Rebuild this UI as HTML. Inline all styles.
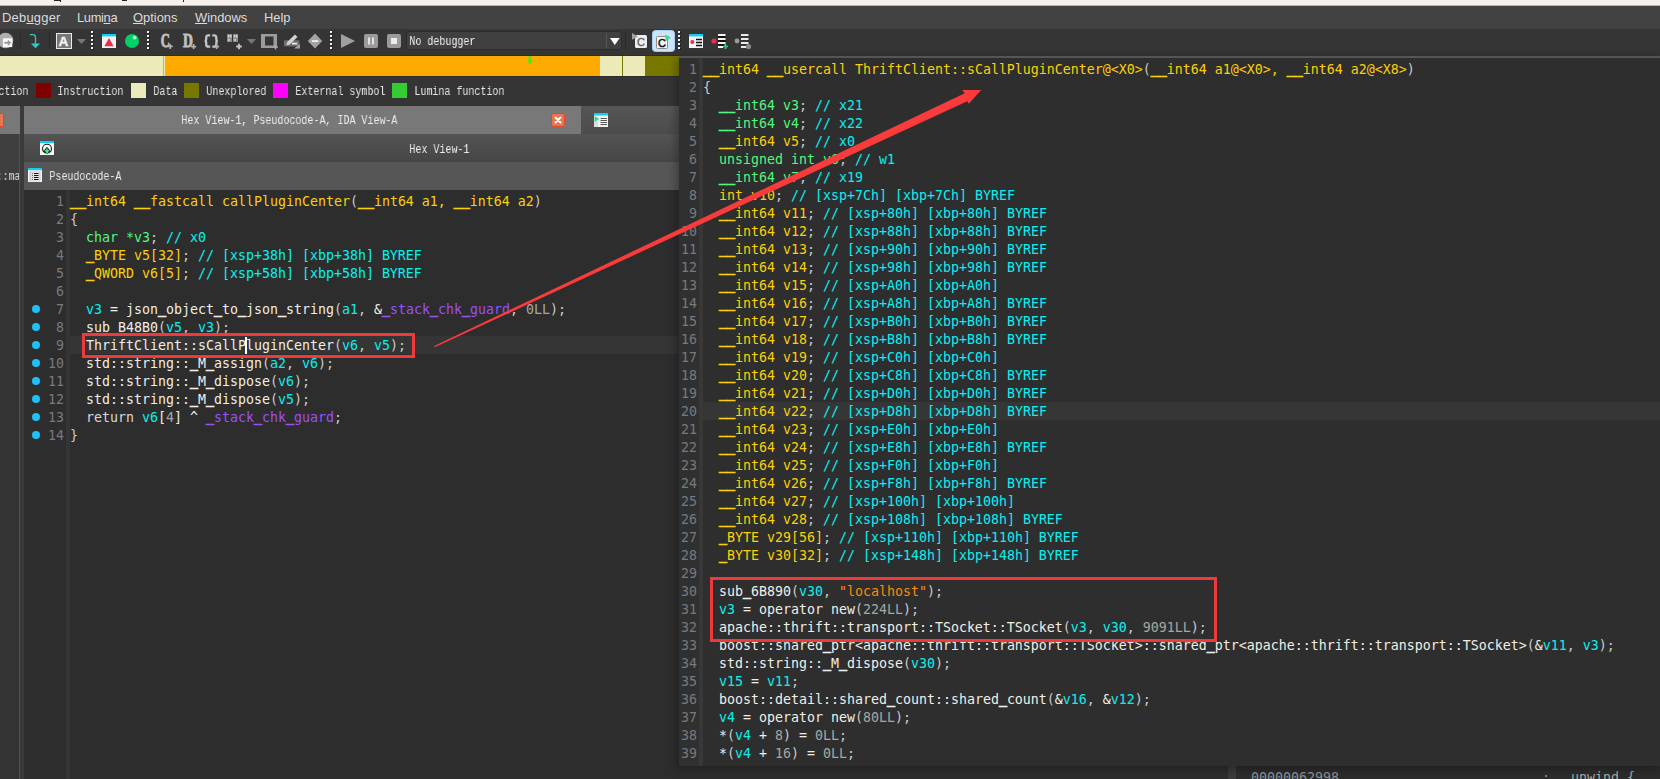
<!DOCTYPE html>
<html lang="en">
<head>
<meta charset="utf-8">
<title>IDA - callPluginCenter</title>
<style>
html,body{margin:0;padding:0}
body{width:1660px;height:779px;overflow:hidden;position:relative;background:#353535;font-family:"Liberation Sans",sans-serif}
.abs,.ln,.no,.dot,.sq,.lg,.mi{position:absolute}
.ln,.no{font-family:"DejaVu Sans Mono","Liberation Mono",monospace;font-size:13.29px;line-height:18px;height:18px;white-space:pre;letter-spacing:0}
.ln b{font-weight:normal;position:relative;top:-1.5px;-webkit-text-stroke:.7px}
.no{width:40px;text-align:right;color:#767b80}
.dot{left:32px;width:8px;height:8px;border-radius:50%;background:#1dc0f8}
.ui{font-family:"Liberation Mono",monospace;font-size:12px;color:#e6e6e6;white-space:pre;line-height:14px;transform:translateX(-.6px) scaleX(.8333);transform-origin:0 0;will-change:transform}
.sq{top:83px;width:15px;height:15px}
.lg{top:85px}
.mi{top:10px;font-size:12.9px;line-height:16px;color:#dcdcdc;white-space:pre}
.mi u{text-decoration-thickness:1px;text-underline-offset:1px}
</style>
</head>
<body>
<!-- top sliver of the window above -->
<div class="abs" style="left:0;top:0;width:1660px;height:6px;background:#b8b4b0"></div>
<div class="abs" style="left:0;top:0;width:1660px;height:5px;background:#f6f1ec"></div>
<div class="abs" style="left:54px;top:0;width:6px;height:1px;background:#222"></div>
<div class="abs" style="left:60px;top:0;width:1px;height:2px;background:#222"></div>
<div class="abs" style="left:122px;top:0;width:5px;height:1px;background:#222"></div>
<div class="abs" style="left:183px;top:0;width:1px;height:2px;background:#222"></div>

<!-- menu bar -->
<div class="abs" style="left:0;top:6px;width:1660px;height:23px;background:#424242"></div>
<div class="mi" style="left:2px;letter-spacing:.25px">Deb<u>u</u>gger</div>
<div class="mi" style="left:77px;letter-spacing:-.35px">Lumi<u>n</u>a</div>
<div class="mi" style="left:133px"><u>O</u>ptions</div>
<div class="mi" style="left:195px"><u>W</u>indows</div>
<div class="mi" style="left:264px">Help</div>

<!-- toolbar -->
<div class="abs" style="left:0;top:29px;width:1660px;height:27px;background:#353535"></div>
<div class="abs" style="left:406px;top:31px;width:216px;height:19px;background:#404040;border:1px solid #2c2c2c;border-radius:3px;box-sizing:border-box"></div>
<svg class="abs" style="left:0;top:29px" width="760" height="27" viewBox="0 29 760 27"><circle cx="5.500" cy="40.500" r="7.800" fill="#aeaeae"/><rect x="3" y="38.300" width="9.300" height="8.800" fill="#fafafa"/><path d="M4.300 41.700h3.500v-2.200l3.400 3.200-3.400 3.200v-2.200h-3.500z" fill="#9a9a9a"/><rect x="20" y="33" width="1" height="16" fill="#2a2a2a"/><path d="M29.800 34.600h2.900a2.800 2.800 0 0 1 2.800 2.800v7" fill="none" stroke="#3cc4c4" stroke-width="1.300"/><path d="M30.900 43.500h9.200l-4.600 4.700z" fill="#3cc4c4"/><rect x="49" y="33" width="1" height="16" fill="#2a2a2a"/><rect x="56.500" y="33.500" width="15" height="15" fill="#787878" stroke="#ececec"/><text x="63.500" y="45.900" text-anchor="middle" style="font:bold 13.600px Liberation Sans,sans-serif" fill="#f4f4f4" stroke="#f4f4f4" stroke-width=".35">A</text><path d="M77 39h9l-4.5 5z" fill="#75757c"/><rect x="92" y="32" width="2" height="2" fill="#222222"/><rect x="91" y="31" width="2" height="2" fill="#f2f2f2"/><rect x="92" y="36" width="2" height="2" fill="#222222"/><rect x="91" y="35" width="2" height="2" fill="#f2f2f2"/><rect x="92" y="40" width="2" height="2" fill="#222222"/><rect x="91" y="39" width="2" height="2" fill="#f2f2f2"/><rect x="92" y="44" width="2" height="2" fill="#222222"/><rect x="91" y="43" width="2" height="2" fill="#f2f2f2"/><rect x="92" y="48" width="2" height="2" fill="#222222"/><rect x="91" y="47" width="2" height="2" fill="#f2f2f2"/><rect x="102" y="34" width="14" height="14" fill="#f1f1f1"/><rect x="102" y="34" width="14" height="2.4" fill="#10cdf6"/><path d="M104.4 46.2h9.2L109 38z" fill="#f02a4c"/><circle cx="132" cy="41" r="7" fill="#00d166"/><circle cx="134.6" cy="37.6" r="1.9" fill="#b4f3cf"/><rect x="148" y="32" width="2" height="2" fill="#222222"/><rect x="147" y="31" width="2" height="2" fill="#f2f2f2"/><rect x="148" y="36" width="2" height="2" fill="#222222"/><rect x="147" y="35" width="2" height="2" fill="#f2f2f2"/><rect x="148" y="40" width="2" height="2" fill="#222222"/><rect x="147" y="39" width="2" height="2" fill="#f2f2f2"/><rect x="148" y="44" width="2" height="2" fill="#222222"/><rect x="147" y="43" width="2" height="2" fill="#f2f2f2"/><rect x="148" y="48" width="2" height="2" fill="#222222"/><rect x="147" y="47" width="2" height="2" fill="#f2f2f2"/><text transform="translate(160.800,47.200) scale(.68,1)" font-family="Liberation Serif, serif" font-weight="bold" font-size="18.500" fill="#c0c0c0" stroke="#c0c0c0" stroke-width=".9">C</text><path d="M167.7 46.4h5.0M170.2 43.9v5.0" stroke="#b4b4b4" stroke-width="1.6"/><text transform="translate(183,47.200) scale(.74,1)" font-family="Liberation Serif, serif" font-weight="bold" font-size="18.500" fill="#c0c0c0" stroke="#c0c0c0" stroke-width=".9">D</text><path d="M191.1 46.6h5.0M193.6 44.1v5.0" stroke="#b4b4b4" stroke-width="1.6"/><path d="M210.200 35.300h-1.700q-2.300 0-2.300 2.300v1.700q0 1.600-1.500 1.700q1.500 .1 1.500 1.700v1.700q0 2.300 2.300 2.300h1.700M212.300 35.300h1.700q2.300 0 2.300 2.300v1.700q0 1.600 1.500 1.700q-1.500 .1-1.500 1.700v1.700q0 2.300-2.300 2.300h-1.700" fill="none" stroke="#c4c4c4" stroke-width="2.300"/><path d="M214.1 46.6h5.0M216.6 44.1v5.0" stroke="#b4b4b4" stroke-width="1.6"/><rect x="227" y="34" width="5" height="8" fill="#8a8a8a"/><rect x="233" y="34" width="5" height="8" fill="#8a8a8a"/><rect x="228" y="35" width="1.500" height="2.500" fill="#d0d0d0"/><rect x="230" y="35" width="1.500" height="2.500" fill="#d0d0d0"/><rect x="234" y="35" width="1.500" height="2.500" fill="#d0d0d0"/><rect x="236" y="35" width="1.500" height="2.500" fill="#d0d0d0"/><rect x="228" y="39" width="2" height="2" fill="#c4c4c4"/><rect x="234" y="39" width="2" height="2" fill="#c4c4c4"/><path d="M236.2 46.5h5.6M239 43.7v5.6" stroke="#c8c8c8" stroke-width="1.8"/><path d="M247 39h9l-4.500 5z" fill="#75757c"/><rect x="261" y="34" width="16" height="14" fill="#9c9c9c"/><rect x="265" y="36.500" width="8.500" height="9" fill="#353535"/><path d="M273.0 47h5.0M275.5 44.5v5.0" stroke="#a6a6a6" stroke-width="1.6"/><rect x="284" y="40.300" width="15.300" height="6" fill="#707070"/><path d="M294 48.600h6v-4.600z" fill="#a2a2a2"/><path d="M286.300 45.200l1-3.300 7.600-7.300 2.600 2.500-7.700 7.300z" fill="#d2d2d2"/><rect x="292" y="42.800" width="5.200" height="1.600" fill="#f4f4f4"/><path d="M315 33.600l7.200 7.400-7.200 7.400-7.200-7.400z" fill="#a2a2a2"/><rect x="311.800" y="40.200" width="6.400" height="1.800" fill="#f2f2f2"/><rect x="331" y="32" width="2" height="2" fill="#222222"/><rect x="330" y="31" width="2" height="2" fill="#f2f2f2"/><rect x="331" y="36" width="2" height="2" fill="#222222"/><rect x="330" y="35" width="2" height="2" fill="#f2f2f2"/><rect x="331" y="40" width="2" height="2" fill="#222222"/><rect x="330" y="39" width="2" height="2" fill="#f2f2f2"/><rect x="331" y="44" width="2" height="2" fill="#222222"/><rect x="330" y="43" width="2" height="2" fill="#f2f2f2"/><rect x="331" y="48" width="2" height="2" fill="#222222"/><rect x="330" y="47" width="2" height="2" fill="#f2f2f2"/><path d="M341 34l14 7-14 7z" fill="#a0a0a0"/><rect x="364" y="34" width="14" height="14" rx="2" fill="#9a9a9a"/><rect x="368" y="37.500" width="2" height="7" fill="#e2e2e2"/><rect x="372" y="37.500" width="2" height="7" fill="#e2e2e2"/><rect x="387" y="34" width="14" height="14" rx="2" fill="#9a9a9a"/><rect x="391" y="38" width="6" height="6" fill="#ececec"/><path d="M610 38h9.600l-4.800 7z" fill="#ffffff"/><rect x="625" y="32" width="1" height="18" fill="#2b2b2b"/><rect x="635" y="35" width="12" height="13" rx="1.500" fill="#eeeeee"/><path d="M632 33l6 3.400-6 3.400z" fill="#a0a0a0"/><text x="637" y="46" font-family="Liberation Sans, sans-serif" font-size="11" fill="#5a5a5a" stroke="#5a5a5a" stroke-width=".3">C</text><rect x="652.500" y="30.500" width="22" height="21" rx="3" fill="#cce4f9" stroke="#a4d0f6"/><rect x="656.500" y="36.500" width="11" height="12" rx="1" fill="#f4f4f4" stroke="#8c8c8c"/><text x="658" y="47" font-family="Liberation Sans, sans-serif" font-size="11" fill="#111" stroke="#111" stroke-width=".5">C</text><path d="M665.500 34.500l5.500 3.300-5.500 3.300z" fill="#3fd58a"/><rect x="679" y="32" width="2" height="2" fill="#222222"/><rect x="678" y="31" width="2" height="2" fill="#f2f2f2"/><rect x="679" y="36" width="2" height="2" fill="#222222"/><rect x="678" y="35" width="2" height="2" fill="#f2f2f2"/><rect x="679" y="40" width="2" height="2" fill="#222222"/><rect x="678" y="39" width="2" height="2" fill="#f2f2f2"/><rect x="679" y="44" width="2" height="2" fill="#222222"/><rect x="678" y="43" width="2" height="2" fill="#f2f2f2"/><rect x="679" y="48" width="2" height="2" fill="#222222"/><rect x="678" y="47" width="2" height="2" fill="#f2f2f2"/><rect x="689" y="34" width="14" height="14" fill="#f4f4f4"/><rect x="689" y="34" width="14" height="2.400" fill="#10cdf6"/><circle cx="692.300" cy="42" r="2" fill="#f02a4c"/><path d="M696 39.500h6M696 42.500h6M696 45.500h6" stroke="#111" stroke-width="1.600"/><circle cx="714" cy="41" r="2.600" fill="#f02a4c"/><path d="M718 35h7.500M718 39h7.500M718 43h7.500M718 47h5" stroke="#f4f4f4" stroke-width="1.800"/><path d="M718 37h7.500M718 41h7.500M718 45h6" stroke="#111" stroke-width="1.800"/><path d="M723.0 46.5h5.0M725.5 44.0v5.0" stroke="#2fd07a" stroke-width="1.6"/><circle cx="737" cy="41" r="2.400" fill="#9a9a9a"/><path d="M741 35h7.500M741 39h7.500M741 43h7.500M741 47h5" stroke="#eaeaea" stroke-width="1.800"/><circle cx="748.500" cy="46.500" r="2.600" fill="#8a8a8a"/></svg>
<div class="abs" style="left:606px;top:33px;width:1px;height:15px;background:#555"></div>
<div class="abs ui" style="left:410px;top:35px;color:#f0f0f0">No debugger</div>

<!-- navigation band -->
<div class="abs" style="left:0;top:55px;width:679px;height:22px;background:#2c2c2c"></div>
<div class="abs" style="left:0;top:56px;width:163px;height:20px;background:#eceab8"></div>
<div class="abs" style="left:163px;top:56px;width:1px;height:20px;background:#ffaa00"></div>
<div class="abs" style="left:164px;top:56px;width:1px;height:20px;background:#eceab8"></div>
<div class="abs" style="left:165px;top:56px;width:435px;height:20px;background:#ffaa00"></div>
<div class="abs" style="left:600px;top:56px;width:22px;height:20px;background:#eceab8"></div>
<div class="abs" style="left:622px;top:56px;width:1px;height:20px;background:#787800"></div>
<div class="abs" style="left:623px;top:56px;width:22px;height:20px;background:#eceab8"></div>
<div class="abs" style="left:645px;top:56px;width:34px;height:20px;background:#787800"></div>
<svg class="abs" style="left:526px;top:56px" width="8" height="9" viewBox="0 0 8 9"><path d="M2.500 0h3v4.500h2L4 8.500 .5 4.500h2z" fill="#5fe312"/></svg>

<!-- legend -->
<div class="lg ui" style="left:-1px">ction</div>
<div class="sq" style="left:36px;background:#800000"></div>
<div class="lg ui" style="left:58px">Instruction</div>
<div class="sq" style="left:131px;background:#eceab8"></div>
<div class="lg ui" style="left:154px">Data</div>
<div class="sq" style="left:184px;background:#787800"></div>
<div class="lg ui" style="left:207px">Unexplored</div>
<div class="sq" style="left:273px;background:#ff00ff"></div>
<div class="lg ui" style="left:296px">External symbol</div>
<div class="sq" style="left:392px;background:#33cc33"></div>
<div class="lg ui" style="left:415px">Lumina function</div>

<!-- tab rows -->
<div class="abs" style="left:0;top:106px;width:20px;height:28px;background:#787878"></div>
<div class="abs" style="left:0;top:113px;width:4px;height:14px;background:#e8764e;border-radius:0 2px 2px 0;border:1px solid #e2452f;border-left:0;box-sizing:border-box"></div>
<div class="abs" style="left:24px;top:106px;width:557px;height:28px;background:#787878"></div>
<div class="abs" style="left:581px;top:106px;width:98px;height:28px;background:linear-gradient(#555,#4c4c4c)"></div>
<div class="abs ui" style="left:182px;top:114px;color:#ececec">Hex View-1, Pseudocode-A, IDA View-A</div>
<svg class="abs" style="left:551px;top:113px" width="14" height="14" viewBox="0 0 14 14"><rect x=".5" y=".5" width="13" height="13" rx="2" fill="#e47650" stroke="#e2452f"/><path d="M4.500 4.500l5 5M9.500 4.500l-5 5" stroke="#fff" stroke-width="1.900" stroke-linecap="round"/></svg>
<svg class="abs" style="left:594px;top:113px" width="14" height="14" viewBox="0 0 14 14"><rect width="14" height="14" fill="#f2f2f2"/><rect width="14" height="2.5" fill="#10cdf6"/><rect x="0" y="8" width="4" height="6" fill="#dcdcdc"/><path d="M6.500 5.500h6.500M6.500 7.500h6.500M6.500 9.500h6.500M6.500 11.500h6.500" stroke="#333" stroke-width=".8"/><path d="M0.500 3l5 3-5 3z" fill="#3fd58a"/></svg>

<div class="abs" style="left:24px;top:134px;width:655px;height:28px;background:linear-gradient(#545454,#464646)"></div>
<svg class="abs" style="left:40px;top:141px" width="14" height="14" viewBox="0 0 14 14"><rect width="14" height="14" fill="#f6f6f6"/><rect width="14" height="2.200" fill="#10cdf6"/><circle cx="7" cy="7.800" r="4.500" fill="#fafafa" stroke="#1a1a1a" stroke-width="1.100"/><path d="M3.300 10.200L7 5.800l3.700 4.400q-3.700 3.600-7.400 0z" fill="#1a1a1a"/><path d="M7 7.200v4M5.600 9.600L7 11.600l1.400-2z" stroke="#3ff08c" stroke-width="1.300" fill="#3ff08c"/></svg>
<div class="abs ui" style="left:410px;top:143px;color:#ececec">Hex View-1</div>

<div class="abs" style="left:24px;top:162px;width:655px;height:28px;background:#565656"></div>
<svg class="abs" style="left:28px;top:168px" width="14" height="14" viewBox="0 0 14 14"><rect width="14" height="14" fill="#f4f4f4"/><rect width="14" height="2.200" fill="#10cdf6"/><rect x="1.500" y="3.200" width="11" height="10" fill="#cacaca"/><rect x="3" y="3.200" width="8.500" height="10" fill="#e2e2e2"/><path d="M6 5.500h4.500M6 7.500h4.500M6 9.500h4.500M6 11.500h4.500" stroke="#1a1a1a" stroke-width="1"/><path d="M4 5.500h1M4 7.500h1M4 9.500h1M4 11.500h1" stroke="#1f86d8" stroke-width="1"/></svg>
<div class="abs ui" style="left:50px;top:170px;color:#ececec">Pseudocode-A</div>

<!-- far-left docked strip -->
<div class="abs" style="left:0;top:134px;width:19px;height:46px;background:#3f3f3f"></div>
<div class="abs" style="left:0;top:180px;width:19px;height:599px;background:#343434"></div>
<div class="abs" style="left:19px;top:134px;width:1px;height:645px;background:#515151"></div>
<div class="abs" style="left:20px;top:106px;width:4px;height:673px;background:#3a3a3a"></div>
<div class="abs" style="left:0;top:166px;width:19px;height:18px;overflow:hidden"><div class="abs ui" style="left:-3px;top:4px;color:#d8d8d8">::ma</div></div>

<!-- left pseudocode view -->
<div class="abs" style="left:24px;top:190px;width:655px;height:589px;background:#2d2d2d"></div>
<div class="abs" style="left:66px;top:190px;width:4px;height:589px;background:#353535"></div>
<div class="abs" style="left:70px;top:336px;width:609px;height:18px;background:#353535"></div>
<i class="dot" style="top:305px"></i>
<i class="dot" style="top:323px"></i>
<i class="dot" style="top:341px"></i>
<i class="dot" style="top:359px"></i>
<i class="dot" style="top:377px"></i>
<i class="dot" style="top:395px"></i>
<i class="dot" style="top:413px"></i>
<i class="dot" style="top:431px"></i>
<div class="no" style="left:24px;top:193px">1</div>
<div class="no" style="left:24px;top:211px">2</div>
<div class="no" style="left:24px;top:229px">3</div>
<div class="no" style="left:24px;top:247px">4</div>
<div class="no" style="left:24px;top:265px">5</div>
<div class="no" style="left:24px;top:283px">6</div>
<div class="no" style="left:24px;top:301px">7</div>
<div class="no" style="left:24px;top:319px">8</div>
<div class="no" style="left:24px;top:337px">9</div>
<div class="no" style="left:24px;top:355px">10</div>
<div class="no" style="left:24px;top:373px">11</div>
<div class="no" style="left:24px;top:391px">12</div>
<div class="no" style="left:24px;top:409px">13</div>
<div class="no" style="left:24px;top:427px">14</div>
<div class="ln" style="left:70px;top:193px"><span style="color:#fcd008"><b>__</b>int64 <b>__</b>fastcall callPluginCenter</span><span style="color:#cbcbcb">(</span><span style="color:#fcd008"><b>__</b>int64 a1, <b>__</b>int64 a2</span><span style="color:#cbcbcb">)</span></div>
<div class="ln" style="left:70px;top:211px"><span style="color:#cbcbcb">{</span></div>
<div class="ln" style="left:70px;top:229px">  <span style="color:#50f87c">char </span><span style="color:#50f87c">*v3</span><span style="color:#cbcbcb">;</span> <span style="color:#08f0f0">// x0</span></div>
<div class="ln" style="left:70px;top:247px">  <span style="color:#fcd008"><b>_</b>BYTE </span><span style="color:#fcd008">v5[32]</span><span style="color:#cbcbcb">;</span> <span style="color:#08f0f0">// [xsp+38h] [xbp+38h] BYREF</span></div>
<div class="ln" style="left:70px;top:265px">  <span style="color:#fcd008"><b>_</b>QWORD </span><span style="color:#fcd008">v6[5]</span><span style="color:#cbcbcb">;</span> <span style="color:#08f0f0">// [xsp+58h] [xbp+58h] BYREF</span></div>
<div class="ln" style="left:70px;top:283px"></div>
<div class="ln" style="left:70px;top:301px">  <span style="color:#0ceeee">v3</span> <span style="color:#f0eee6">=</span> <span style="color:#f0eee6">json<b>_</b>object<b>_</b>to<b>_</b>json<b>_</b>string</span><span style="color:#cbcbcb">(</span><span style="color:#0ceeee">a1</span><span style="color:#cbcbcb">,</span> <span style="color:#f0eee6">&amp;</span><span style="color:#9d50fa"><b>_</b>stack<b>_</b>chk<b>_</b>guard</span><span style="color:#cbcbcb">,</span> <span style="color:#a3a8a3">0LL</span><span style="color:#cbcbcb">);</span></div>
<div class="ln" style="left:70px;top:319px">  <span style="color:#f0eee6">sub<b>_</b>B48B0</span><span style="color:#cbcbcb">(</span><span style="color:#0ceeee">v5</span><span style="color:#cbcbcb">,</span> <span style="color:#0ceeee">v3</span><span style="color:#cbcbcb">);</span></div>
<div class="ln" style="left:70px;top:337px">  <span style="color:#f0eee6">ThriftClient::sCallPluginCenter</span><span style="color:#cbcbcb">(</span><span style="color:#0ceeee">v6</span><span style="color:#cbcbcb">,</span> <span style="color:#0ceeee">v5</span><span style="color:#cbcbcb">);</span></div>
<div class="ln" style="left:70px;top:355px">  <span style="color:#f0eee6">std::string::<b>_</b>M<b>_</b>assign</span><span style="color:#cbcbcb">(</span><span style="color:#0ceeee">a2</span><span style="color:#cbcbcb">,</span> <span style="color:#0ceeee">v6</span><span style="color:#cbcbcb">);</span></div>
<div class="ln" style="left:70px;top:373px">  <span style="color:#f0eee6">std::string::<b>_</b>M<b>_</b>dispose</span><span style="color:#cbcbcb">(</span><span style="color:#0ceeee">v6</span><span style="color:#cbcbcb">);</span></div>
<div class="ln" style="left:70px;top:391px">  <span style="color:#f0eee6">std::string::<b>_</b>M<b>_</b>dispose</span><span style="color:#cbcbcb">(</span><span style="color:#0ceeee">v5</span><span style="color:#cbcbcb">);</span></div>
<div class="ln" style="left:70px;top:409px">  <span style="color:#d8d8d8">return</span> <span style="color:#0ceeee">v6</span><span style="color:#f0eee6">[</span><span style="color:#a3a8a3">4</span><span style="color:#f0eee6">]</span> <span style="color:#f0eee6">^</span> <span style="color:#9d50fa"><b>_</b>stack<b>_</b>chk<b>_</b>guard</span><span style="color:#cbcbcb">;</span></div>
<div class="ln" style="left:70px;top:427px"><span style="color:#cbcbcb">}</span></div>
<div class="abs" style="left:245px;top:337px;width:2px;height:17px;background:#fff"></div>
<div class="abs" style="left:82px;top:333px;width:333px;height:25px;border:3px solid #ee3a3a;box-sizing:border-box"></div>

<!-- bottom strip of underlying disassembly view -->
<div class="abs" style="left:679px;top:760px;width:981px;height:19px;background:#2d2d2d"></div>
<div class="abs" style="left:1228px;top:766px;width:8px;height:13px;background:#3a3a3a"></div>
<div class="abs" style="left:1236px;top:766px;width:424px;height:13px;background:#2b2b2b"></div>
<div class="abs" style="left:1251px;top:769px;width:400px;height:10px;overflow:hidden">
 <div class="ln" style="left:0;top:0;color:#8a9096">00000062998</div>
 <div class="ln" style="left:291px;top:0;color:#8a9096">;</div>
 <div class="ln" style="left:320px;top:0;color:#a8a8a0">unwind {</div>
</div>

<!-- pasted decompiler view (right) -->
<div class="abs" style="left:679px;top:56px;width:981px;height:710px;background:#2e2e2e;border-radius:0 0 0 3px;box-shadow:-2px 2px 9px 1px rgba(0,0,0,.28);overflow:hidden">
 <div class="abs" style="left:0;top:0;width:981px;height:2px;background:#555"></div>
 <div class="abs" style="left:0;top:2px;width:20px;height:708px;background:#303030"></div>
 <div class="abs" style="left:20px;top:2px;width:4px;height:708px;background:#383838"></div>
 <div class="abs" style="left:24px;top:346px;width:957px;height:18px;background:#363636"></div>
<div class="no" style="left:-22px;top:5px">1</div>
<div class="no" style="left:-22px;top:23px">2</div>
<div class="no" style="left:-22px;top:41px">3</div>
<div class="no" style="left:-22px;top:59px">4</div>
<div class="no" style="left:-22px;top:77px">5</div>
<div class="no" style="left:-22px;top:95px">6</div>
<div class="no" style="left:-22px;top:113px">7</div>
<div class="no" style="left:-22px;top:131px">8</div>
<div class="no" style="left:-22px;top:149px">9</div>
<div class="no" style="left:-22px;top:167px">10</div>
<div class="no" style="left:-22px;top:185px">11</div>
<div class="no" style="left:-22px;top:203px">12</div>
<div class="no" style="left:-22px;top:221px">13</div>
<div class="no" style="left:-22px;top:239px">14</div>
<div class="no" style="left:-22px;top:257px">15</div>
<div class="no" style="left:-22px;top:275px">16</div>
<div class="no" style="left:-22px;top:293px">17</div>
<div class="no" style="left:-22px;top:311px">18</div>
<div class="no" style="left:-22px;top:329px">19</div>
<div class="no" style="left:-22px;top:347px">20</div>
<div class="no" style="left:-22px;top:365px">21</div>
<div class="no" style="left:-22px;top:383px">22</div>
<div class="no" style="left:-22px;top:401px">23</div>
<div class="no" style="left:-22px;top:419px">24</div>
<div class="no" style="left:-22px;top:437px">25</div>
<div class="no" style="left:-22px;top:455px">26</div>
<div class="no" style="left:-22px;top:473px">27</div>
<div class="no" style="left:-22px;top:491px">28</div>
<div class="no" style="left:-22px;top:509px">29</div>
<div class="no" style="left:-22px;top:527px">30</div>
<div class="no" style="left:-22px;top:545px">31</div>
<div class="no" style="left:-22px;top:563px">32</div>
<div class="no" style="left:-22px;top:581px">33</div>
<div class="no" style="left:-22px;top:599px">34</div>
<div class="no" style="left:-22px;top:617px">35</div>
<div class="no" style="left:-22px;top:635px">36</div>
<div class="no" style="left:-22px;top:653px">37</div>
<div class="no" style="left:-22px;top:671px">38</div>
<div class="no" style="left:-22px;top:689px">39</div>
<div class="ln" style="left:24px;top:5px"><span style="color:#fcd008"><b>__</b>int64 <b>__</b>usercall ThriftClient::sCallPluginCenter@&lt;X0&gt;</span><span style="color:#cbcbcb">(</span><span style="color:#fcd008"><b>__</b>int64 a1@&lt;X0&gt;, <b>__</b>int64 a2@&lt;X8&gt;</span><span style="color:#cbcbcb">)</span></div>
<div class="ln" style="left:24px;top:23px"><span style="color:#cbcbcb">{</span></div>
<div class="ln" style="left:24px;top:41px">  <span style="color:#50f87c"><b>__</b>int64 </span><span style="color:#50f87c">v3</span><span style="color:#cbcbcb">;</span> <span style="color:#08f0f0">// x21</span></div>
<div class="ln" style="left:24px;top:59px">  <span style="color:#50f87c"><b>__</b>int64 </span><span style="color:#50f87c">v4</span><span style="color:#cbcbcb">;</span> <span style="color:#08f0f0">// x22</span></div>
<div class="ln" style="left:24px;top:77px">  <span style="color:#fcd008"><b>__</b>int64 </span><span style="color:#fcd008">v5</span><span style="color:#cbcbcb">;</span> <span style="color:#08f0f0">// x0</span></div>
<div class="ln" style="left:24px;top:95px">  <span style="color:#50f87c">unsigned int </span><span style="color:#50f87c">v6</span><span style="color:#cbcbcb">;</span> <span style="color:#08f0f0">// w1</span></div>
<div class="ln" style="left:24px;top:113px">  <span style="color:#50f87c"><b>__</b>int64 </span><span style="color:#50f87c">v7</span><span style="color:#cbcbcb">;</span> <span style="color:#08f0f0">// x19</span></div>
<div class="ln" style="left:24px;top:131px">  <span style="color:#fcd008">int </span><span style="color:#fcd008">v10</span><span style="color:#cbcbcb">;</span> <span style="color:#08f0f0">// [xsp+7Ch] [xbp+7Ch] BYREF</span></div>
<div class="ln" style="left:24px;top:149px">  <span style="color:#fcd008"><b>__</b>int64 </span><span style="color:#fcd008">v11</span><span style="color:#cbcbcb">;</span> <span style="color:#08f0f0">// [xsp+80h] [xbp+80h] BYREF</span></div>
<div class="ln" style="left:24px;top:167px">  <span style="color:#fcd008"><b>__</b>int64 </span><span style="color:#fcd008">v12</span><span style="color:#cbcbcb">;</span> <span style="color:#08f0f0">// [xsp+88h] [xbp+88h] BYREF</span></div>
<div class="ln" style="left:24px;top:185px">  <span style="color:#fcd008"><b>__</b>int64 </span><span style="color:#fcd008">v13</span><span style="color:#cbcbcb">;</span> <span style="color:#08f0f0">// [xsp+90h] [xbp+90h] BYREF</span></div>
<div class="ln" style="left:24px;top:203px">  <span style="color:#fcd008"><b>__</b>int64 </span><span style="color:#fcd008">v14</span><span style="color:#cbcbcb">;</span> <span style="color:#08f0f0">// [xsp+98h] [xbp+98h] BYREF</span></div>
<div class="ln" style="left:24px;top:221px">  <span style="color:#fcd008"><b>__</b>int64 </span><span style="color:#fcd008">v15</span><span style="color:#cbcbcb">;</span> <span style="color:#08f0f0">// [xsp+A0h] [xbp+A0h]</span></div>
<div class="ln" style="left:24px;top:239px">  <span style="color:#fcd008"><b>__</b>int64 </span><span style="color:#fcd008">v16</span><span style="color:#cbcbcb">;</span> <span style="color:#08f0f0">// [xsp+A8h] [xbp+A8h] BYREF</span></div>
<div class="ln" style="left:24px;top:257px">  <span style="color:#fcd008"><b>__</b>int64 </span><span style="color:#fcd008">v17</span><span style="color:#cbcbcb">;</span> <span style="color:#08f0f0">// [xsp+B0h] [xbp+B0h] BYREF</span></div>
<div class="ln" style="left:24px;top:275px">  <span style="color:#fcd008"><b>__</b>int64 </span><span style="color:#fcd008">v18</span><span style="color:#cbcbcb">;</span> <span style="color:#08f0f0">// [xsp+B8h] [xbp+B8h] BYREF</span></div>
<div class="ln" style="left:24px;top:293px">  <span style="color:#fcd008"><b>__</b>int64 </span><span style="color:#fcd008">v19</span><span style="color:#cbcbcb">;</span> <span style="color:#08f0f0">// [xsp+C0h] [xbp+C0h]</span></div>
<div class="ln" style="left:24px;top:311px">  <span style="color:#fcd008"><b>__</b>int64 </span><span style="color:#fcd008">v20</span><span style="color:#cbcbcb">;</span> <span style="color:#08f0f0">// [xsp+C8h] [xbp+C8h] BYREF</span></div>
<div class="ln" style="left:24px;top:329px">  <span style="color:#fcd008"><b>__</b>int64 </span><span style="color:#fcd008">v21</span><span style="color:#cbcbcb">;</span> <span style="color:#08f0f0">// [xsp+D0h] [xbp+D0h] BYREF</span></div>
<div class="ln" style="left:24px;top:347px">  <span style="color:#fcd008"><b>__</b>int64 </span><span style="color:#fcd008">v22</span><span style="color:#cbcbcb">;</span> <span style="color:#08f0f0">// [xsp+D8h] [xbp+D8h] BYREF</span></div>
<div class="ln" style="left:24px;top:365px">  <span style="color:#fcd008"><b>__</b>int64 </span><span style="color:#fcd008">v23</span><span style="color:#cbcbcb">;</span> <span style="color:#08f0f0">// [xsp+E0h] [xbp+E0h]</span></div>
<div class="ln" style="left:24px;top:383px">  <span style="color:#fcd008"><b>__</b>int64 </span><span style="color:#fcd008">v24</span><span style="color:#cbcbcb">;</span> <span style="color:#08f0f0">// [xsp+E8h] [xbp+E8h] BYREF</span></div>
<div class="ln" style="left:24px;top:401px">  <span style="color:#fcd008"><b>__</b>int64 </span><span style="color:#fcd008">v25</span><span style="color:#cbcbcb">;</span> <span style="color:#08f0f0">// [xsp+F0h] [xbp+F0h]</span></div>
<div class="ln" style="left:24px;top:419px">  <span style="color:#fcd008"><b>__</b>int64 </span><span style="color:#fcd008">v26</span><span style="color:#cbcbcb">;</span> <span style="color:#08f0f0">// [xsp+F8h] [xbp+F8h] BYREF</span></div>
<div class="ln" style="left:24px;top:437px">  <span style="color:#fcd008"><b>__</b>int64 </span><span style="color:#fcd008">v27</span><span style="color:#cbcbcb">;</span> <span style="color:#08f0f0">// [xsp+100h] [xbp+100h]</span></div>
<div class="ln" style="left:24px;top:455px">  <span style="color:#fcd008"><b>__</b>int64 </span><span style="color:#fcd008">v28</span><span style="color:#cbcbcb">;</span> <span style="color:#08f0f0">// [xsp+108h] [xbp+108h] BYREF</span></div>
<div class="ln" style="left:24px;top:473px">  <span style="color:#fcd008"><b>_</b>BYTE </span><span style="color:#fcd008">v29[56]</span><span style="color:#cbcbcb">;</span> <span style="color:#08f0f0">// [xsp+110h] [xbp+110h] BYREF</span></div>
<div class="ln" style="left:24px;top:491px">  <span style="color:#fcd008"><b>_</b>BYTE </span><span style="color:#fcd008">v30[32]</span><span style="color:#cbcbcb">;</span> <span style="color:#08f0f0">// [xsp+148h] [xbp+148h] BYREF</span></div>
<div class="ln" style="left:24px;top:509px"></div>
<div class="ln" style="left:24px;top:527px">  <span style="color:#f0eee6">sub<b>_</b>6B890</span><span style="color:#cbcbcb">(</span><span style="color:#0ceeee">v30</span><span style="color:#cbcbcb">,</span> <span style="color:#ff8a06">"localhost"</span><span style="color:#cbcbcb">);</span></div>
<div class="ln" style="left:24px;top:545px">  <span style="color:#0ceeee">v3</span> <span style="color:#f0eee6">=</span> <span style="color:#f0eee6">operator</span> <span style="color:#f0eee6">new</span><span style="color:#cbcbcb">(</span><span style="color:#a3a8a3">224LL</span><span style="color:#cbcbcb">);</span></div>
<div class="ln" style="left:24px;top:563px">  <span style="color:#f0eee6">apache::thrift::transport::TSocket::TSocket</span><span style="color:#cbcbcb">(</span><span style="color:#0ceeee">v3</span><span style="color:#cbcbcb">,</span> <span style="color:#0ceeee">v30</span><span style="color:#cbcbcb">,</span> <span style="color:#a3a8a3">9091LL</span><span style="color:#cbcbcb">);</span></div>
<div class="ln" style="left:24px;top:581px">  <span style="color:#f0eee6">boost::shared<b>_</b>ptr</span><span style="color:#f0eee6">&lt;apache::thrift::transport::TSocket&gt;::shared<b>_</b>ptr</span><span style="color:#f0eee6">&lt;apache::thrift::transport::TSocket&gt;</span><span style="color:#cbcbcb">(</span><span style="color:#f0eee6">&amp;</span><span style="color:#0ceeee">v11</span><span style="color:#cbcbcb">,</span> <span style="color:#0ceeee">v3</span><span style="color:#cbcbcb">);</span></div>
<div class="ln" style="left:24px;top:599px">  <span style="color:#f0eee6">std::string::<b>_</b>M<b>_</b>dispose</span><span style="color:#cbcbcb">(</span><span style="color:#0ceeee">v30</span><span style="color:#cbcbcb">);</span></div>
<div class="ln" style="left:24px;top:617px">  <span style="color:#0ceeee">v15</span> <span style="color:#f0eee6">=</span> <span style="color:#0ceeee">v11</span><span style="color:#cbcbcb">;</span></div>
<div class="ln" style="left:24px;top:635px">  <span style="color:#f0eee6">boost::detail::shared<b>_</b>count</span><span style="color:#f0eee6">::shared<b>_</b>count</span><span style="color:#cbcbcb">(</span><span style="color:#f0eee6">&amp;</span><span style="color:#0ceeee">v16</span><span style="color:#cbcbcb">,</span> <span style="color:#f0eee6">&amp;</span><span style="color:#0ceeee">v12</span><span style="color:#cbcbcb">);</span></div>
<div class="ln" style="left:24px;top:653px">  <span style="color:#0ceeee">v4</span> <span style="color:#f0eee6">=</span> <span style="color:#f0eee6">operator</span> <span style="color:#f0eee6">new</span><span style="color:#cbcbcb">(</span><span style="color:#a3a8a3">80LL</span><span style="color:#cbcbcb">);</span></div>
<div class="ln" style="left:24px;top:671px">  <span style="color:#f0eee6">*</span><span style="color:#cbcbcb">(</span><span style="color:#0ceeee">v4</span> <span style="color:#f0eee6">+</span> <span style="color:#a3a8a3">8</span><span style="color:#cbcbcb">)</span> <span style="color:#f0eee6">=</span> <span style="color:#a3a8a3">0LL</span><span style="color:#cbcbcb">;</span></div>
<div class="ln" style="left:24px;top:689px">  <span style="color:#f0eee6">*</span><span style="color:#cbcbcb">(</span><span style="color:#0ceeee">v4</span> <span style="color:#f0eee6">+</span> <span style="color:#a3a8a3">16</span><span style="color:#cbcbcb">)</span> <span style="color:#f0eee6">=</span> <span style="color:#a3a8a3">0LL</span><span style="color:#cbcbcb">;</span></div>
 <div class="abs" style="left:31px;top:521px;width:507px;height:65px;border:3px solid #ee3a3a;box-sizing:border-box"></div>
</div>

<!-- annotation arrow -->
<svg class="abs" style="left:0;top:0" width="1660" height="779" viewBox="0 0 1660 779"><path d="M434.200 345.900 L964.700 93.300 L962.200 90 L981.200 90 L968.800 103.800 L967.300 101.200 L434.800 347.200 Z" fill="#f93b3b"/></svg>
</body>
</html>
